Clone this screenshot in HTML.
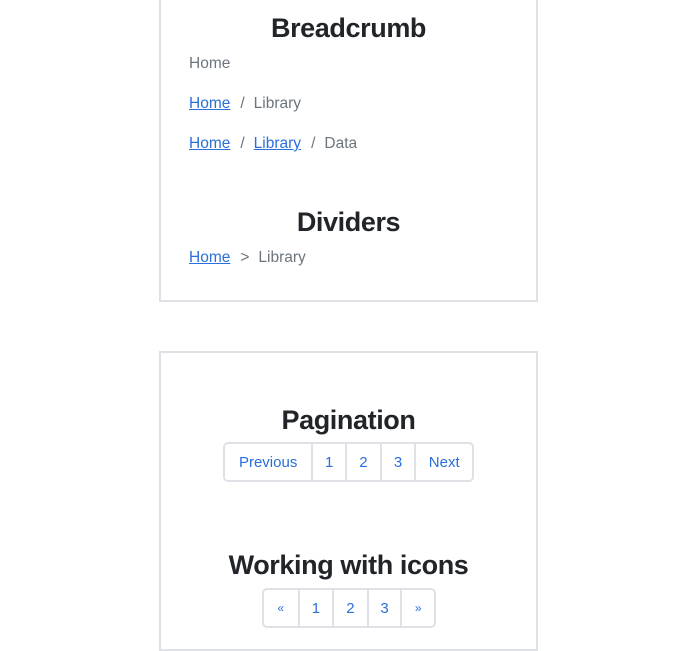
<!DOCTYPE html>
<html><head><style>
*{box-sizing:border-box;margin:0;padding:0}
body{width:682px;height:633px;background:#fff;font-family:"Liberation Sans",sans-serif;position:relative;overflow:hidden;color:#212529}
.box{position:absolute;left:159px;width:379px;border:2px solid #dee2e6}
.h{position:absolute;left:159px;width:379px;text-align:center;font-size:27px;font-weight:bold;color:#212529;line-height:32px;letter-spacing:-0.4px}
.bc{position:absolute;left:189px;font-size:15.5px;color:#6c757d;line-height:20px}
.bc a{color:#2a6fdb;text-decoration:underline}
.sep{color:#6c757d;padding:0 9px 0 10px}
.pg{position:absolute;display:flex;border:2px solid #dee2e6;border-radius:5px;height:40px}
.pg span{display:flex;align-items:center;justify-content:center;color:#2a6fdb;font-size:15px;border-left:2px solid #dee2e6;height:100%}
.pg span:first-child{border-left:none}
</style></head><body>
<div class="box" style="top:-10px;height:312px"></div>
<div class="box" style="top:351px;height:300px"></div>

<div class="h" style="top:12px">Breadcrumb</div>
<div class="bc" style="top:54px">Home</div>
<div class="bc" style="top:94px"><a>Home</a><span class="sep">/</span>Library</div>
<div class="bc" style="top:134px"><a>Home</a><span class="sep">/</span><a>Library</a><span class="sep">/</span>Data</div>

<div class="h" style="top:206px">Dividers</div>
<div class="bc" style="top:248px"><a>Home</a><span class="sep">&gt;</span>Library</div>

<div class="h" style="top:404px">Pagination</div>
<div class="pg" style="left:223px;top:442px;width:251px">
<span style="width:87px">Previous</span><span style="width:34px">1</span><span style="width:35px">2</span><span style="width:35px">3</span><span style="width:58px">Next</span>
</div>

<div class="h" style="top:549px">Working with icons</div>
<div class="pg" style="left:262px;top:588px;width:174px">
<span style="width:34px;font-size:12px">«</span><span style="width:35px">1</span><span style="width:35px">2</span><span style="width:34px">3</span><span style="width:34px;font-size:12px">»</span>
</div>
</body></html>
